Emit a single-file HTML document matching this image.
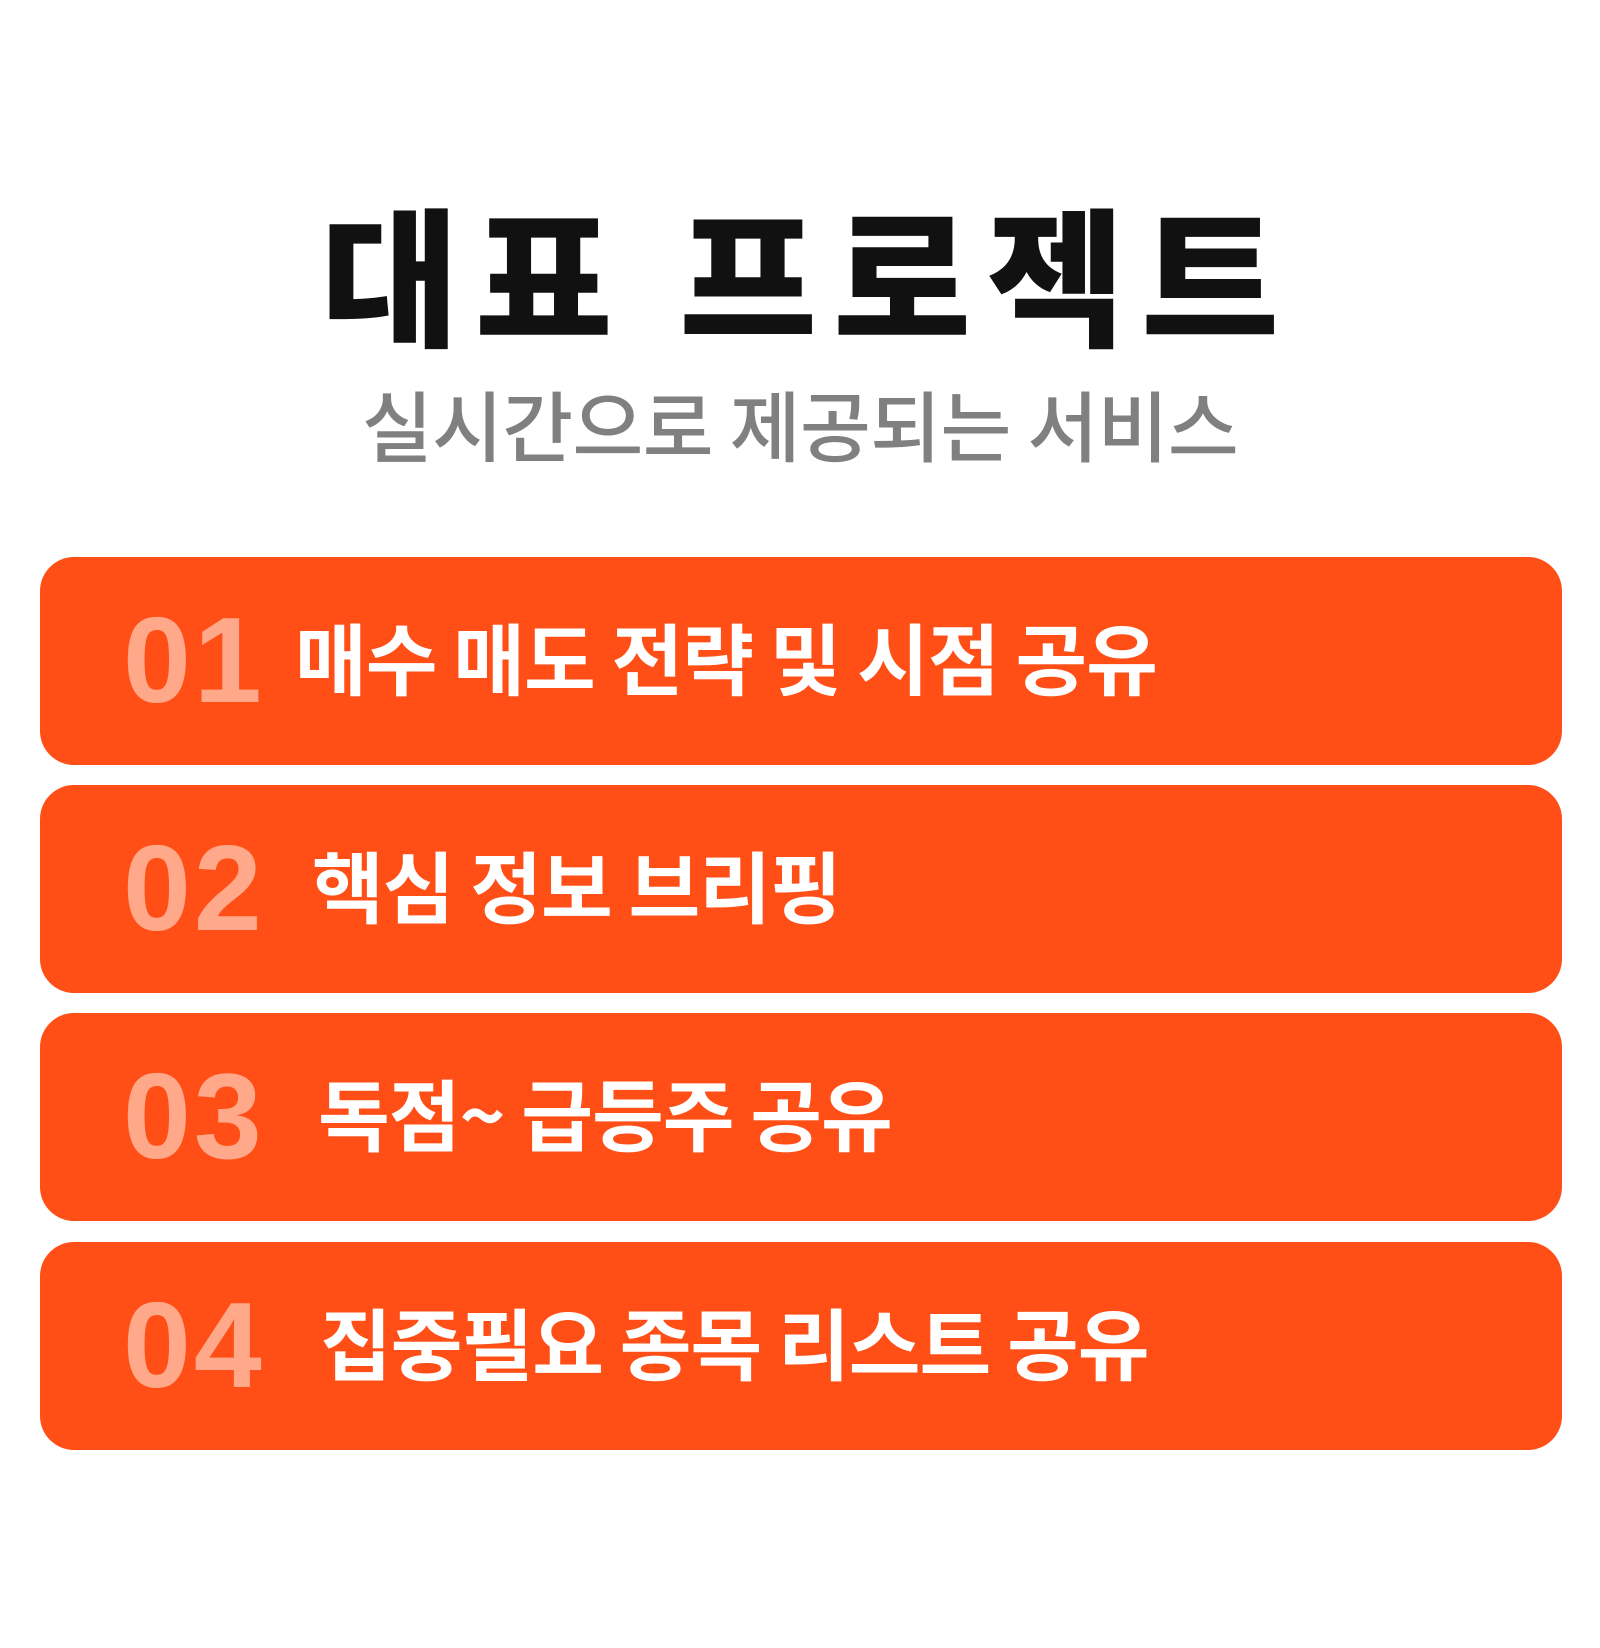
<!DOCTYPE html>
<html><head><meta charset="utf-8"><style>
body{margin:0;width:1600px;height:1648px;background:#fff;font-family:"Liberation Sans","Noto Sans CJK KR",sans-serif;position:relative;overflow:hidden}
h1{position:absolute;left:0;width:1600px;top:196px;margin:0;text-align:center;font:900 150px/1 "Noto Sans CJK KR",sans-serif;color:#111;letter-spacing:16px;text-indent:16px}
.sub{position:absolute;left:0;width:1600px;top:385px;text-align:center;font:500 77px/1 "Noto Sans CJK KR",sans-serif;color:#808080;letter-spacing:-0.6px}
.card{position:absolute;left:40px;width:1522px;height:208px;background:#FF4F17;border-radius:34px}
.n{position:absolute;left:83px;top:42px;font:bold 122px/1 "Liberation Sans",sans-serif;color:#FFA98A;letter-spacing:3px}
.t{position:absolute;top:60px;font:bold 78px/1 "Noto Sans CJK KR",sans-serif;color:#fff;letter-spacing:-1px;white-space:nowrap}
</style></head><body>
<h1>대표 프로젝트</h1>
<div class="sub">실시간으로 제공되는 서비스</div>
<div class="card" style="top:557px"><span class="n">01</span><span class="t" style="left:255px">매수 매도 전략 및 시점 공유</span></div>
<div class="card" style="top:785px"><span class="n">02</span><span class="t" style="left:272px">핵심 정보 브리핑</span></div>
<div class="card" style="top:1013px"><span class="n">03</span><span class="t" style="left:278px">독점~ 급등주 공유</span></div>
<div class="card" style="top:1242px"><span class="n">04</span><span class="t" style="left:280px">집중필요 종목 리스트 공유</span></div>
</body></html>
